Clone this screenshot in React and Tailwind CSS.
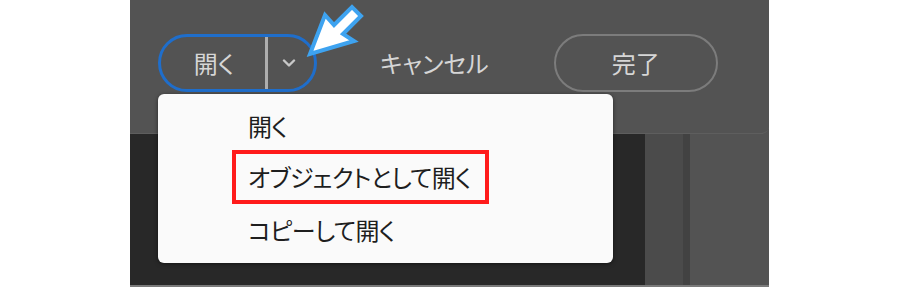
const jp = "font-['Noto_Sans_CJK_JP','Noto_Sans',sans-serif] [font-feature-settings:'palt']";

const Chevron = () => (
  <svg width="14" height="8" viewBox="0 0 14 8" fill="none">
    <path d="M2 1.5l5 5 5-5" stroke="#c8c8c8" strokeWidth="2.4" strokeLinecap="round" strokeLinejoin="round" />
  </svg>
);

// callout arrow pointing at the dropdown toggle
const Arrow = () => (
  <svg className="absolute left-[172px] top-0" width="66" height="62" viewBox="0 0 66 62">
    <polygon
      points="8,54 23,15 32,25 50,7 59,16 41,34 52,41"
      fill="#ffffff"
      stroke="#3ea3f0"
      strokeWidth="4"
      strokeLinejoin="miter"
    />
  </svg>
);

export default function App() {
  return (
    <div className="w-[900px] h-[287px] bg-white flex">
      <div className={`ml-[130px] w-[639px] h-[287px] relative flex flex-col bg-[#535353] border-b-2 border-[#7a7a7a] ${jp}`}>
        {/* top bar */}
        <div className="h-[134px] shrink-0 bg-[#535353] rounded-br-lg border-b border-[#5e5e5e] flex items-start pl-[28px] pt-[34px]">
          <div className="h-[58px] w-[159px] rounded-full border-[3px] border-[#1f6ecb] flex items-stretch">
            <div className="w-[104px] flex items-center justify-center text-[24px] text-[#d6d6d6] pl-[2px]">開く</div>
            <div className="w-[3px] bg-[#aeaeae]" />
            <div className="flex-1 flex items-center justify-center pr-[4px]">
              <Chevron />
            </div>
          </div>
          <div className="h-[58px] ml-[63px] flex items-center text-[24px] text-[#d6d6d6]">キャンセル</div>
          <div className="h-[58px] w-[164px] ml-[65px] rounded-full border-2 border-[#7c7c7c] flex items-center justify-center text-[24px] text-[#d6d6d6]">
            完了
          </div>
        </div>

        {/* lower area */}
        <div className="flex-1 flex">
          <div className="w-[515px] bg-[#282828]" />
          <div className="w-[38px] bg-[#4b4b4b]" />
          <div className="w-[7px] bg-[#424242]" />
          <div className="flex-1 bg-[#535353]" />
        </div>

        <Arrow />

        {/* dropdown menu */}
        <div className="absolute left-[28px] top-[94px] w-[455px] h-[169px] bg-[#fafafa] rounded-md shadow-[0_1px_4px_rgba(0,0,0,0.5)] pt-[6px] text-[24px] tracking-[-0.6px] text-[#1e1e1e]">
          <div className="h-[52px] pl-[90px] flex items-center">開く</div>
          <div className="h-[54px] -mt-[2px] ml-[74px] w-[257px] border-[4px] border-[#ff1b1b] pl-[12px] flex items-center">
            オブジェクトとして開く
          </div>
          <div className="h-[52px] pl-[90px] flex items-center">コピーして開く</div>
        </div>
      </div>
    </div>
  );
}
